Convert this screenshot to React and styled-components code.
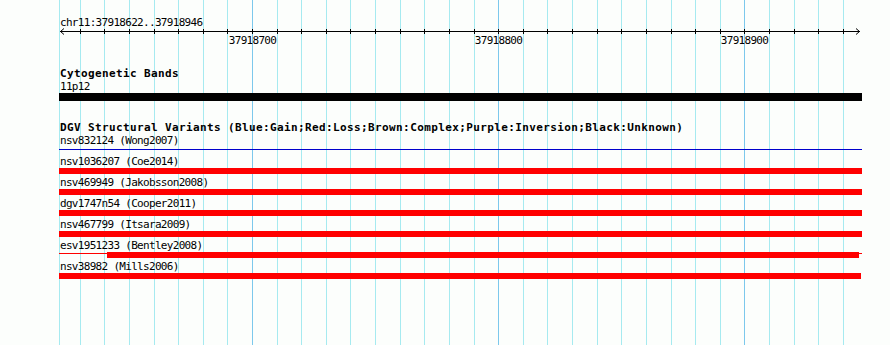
import React from "react";
import styled, { createGlobalStyle } from "styled-components";

const GlobalStyle = createGlobalStyle`
  html, body { margin: 0; padding: 0; background: #fcfefc; }
`;

const REF_BP = 37918700;
const REF_X = 252;
const PX_PER_BP = 2.462;
const LEFT = 59;
const TRACK_W = 803;
const bpToX = (bp) => Math.round(REF_X + (bp - REF_BP) * PX_PER_BP);

const gridKs = Array.from({ length: 32 }, (_, i) => i - 7);
const gridLines = gridKs.map((k) => ({ x: bpToX(REF_BP + k * 10), major: k % 10 === 0 }));
const tickLabels = [37918700, 37918800, 37918900];

const features = [
  { id: "nsv832124", study: "Wong2007", kind: "line", color: "#0000cc", lineOffset: 2 },
  { id: "nsv1036207", study: "Coe2014", kind: "bar", start: 0, width: 803 },
  { id: "nsv469949", study: "Jakobsson2008", kind: "bar", start: 0, width: 803 },
  { id: "dgv1747n54", study: "Cooper2011", kind: "bar", start: 0, width: 803 },
  { id: "nsv467799", study: "Itsara2009", kind: "bar", start: 0, width: 803 },
  { id: "esv1951233", study: "Bentley2008", kind: "split", start: 48, width: 752, lineOffset: 1 },
  { id: "nsv38982", study: "Mills2006", kind: "bar", start: 0, width: 802 },
];

const Page = styled.div`
  position: relative;
  width: 890px;
  height: 345px;
  overflow: hidden;
  background: #fcfefc;
`;

const GridLayer = styled.svg`
  position: absolute;
  left: 0;
  top: 0;
  z-index: 0;
`;

const Content = styled.div`
  position: relative;
  z-index: 1;
  padding: 17px 0 0 ${LEFT}px;
  width: ${TRACK_W}px;
  display: flex;
  flex-direction: column;
`;

const SmallText = styled.div`
  font-family: "DejaVu Sans Mono", "Liberation Mono", monospace;
  font-size: 11px;
  letter-spacing: -0.69px;
  line-height: ${(p) => p.$lh || 13}px;
  color: #000;
  padding-left: 1px;
  white-space: pre;
`;

const TrackTitle = styled.div`
  font-family: "DejaVu Sans Mono", "Liberation Mono", monospace;
  font-weight: bold;
  font-size: 11px;
  letter-spacing: 0.38px;
  line-height: 13px;
  color: #000;
  padding-left: 1px;
  margin-top: ${(p) => p.$gap}px;
  white-space: pre;
`;

const RulerSvg = styled.svg`
  display: block;
  overflow: visible;
`;

const Section = styled.section`
  display: flex;
  flex-direction: column;
`;

const BandBar = styled.div`
  height: 8px;
  width: ${TRACK_W}px;
  background: #000;
`;

const FeatureRow = styled.div`
  display: flex;
  flex-direction: column;
  margin-bottom: 2px;
`;

const BarSlot = styled.div`
  position: relative;
  height: 6px;
  width: ${TRACK_W}px;
`;

const ThinLine = styled.div`
  height: 1px;
  width: ${TRACK_W}px;
  margin-top: ${(p) => p.$offset}px;
  background: ${(p) => p.$color};
`;

const ThickBar = styled.div`
  height: 6px;
  background: #ff0000;
`;

const OverBar = styled(ThickBar)`
  position: absolute;
  top: 0;
`;

function Ruler() {
  const w = TRACK_W;
  const y = 3.5;
  return (
    <RulerSvg width={w} height={20} viewBox={`0 0 ${w} 20`}>
      <line x1={1} y1={y} x2={801} y2={y} stroke="#000" strokeWidth="1" />
      <polyline points={`5,0.5 1.5,${y} 5,6.5`} fill="none" stroke="#000" strokeWidth="1" />
      <polyline points={`797,0.5 800.5,${y} 797,6.5`} fill="none" stroke="#000" strokeWidth="1" />
      {gridLines.map((g) => (
        <line key={g.x} x1={g.x - LEFT + 0.5} y1={1} x2={g.x - LEFT + 0.5} y2={6} stroke="#000" strokeWidth="1" />
      ))}
      {tickLabels.map((bp) => (
        <text
          key={bp}
          x={bpToX(bp) - LEFT + 0.5}
          y={16}
          textAnchor="middle"
          fontFamily='"DejaVu Sans Mono", "Liberation Mono", monospace'
          fontSize="11"
          letterSpacing="-0.69"
          fill="#000"
        >
          {bp}
        </text>
      ))}
    </RulerSvg>
  );
}

function Feature({ f }) {
  return (
    <FeatureRow>
      <SmallText>{`${f.id} (${f.study})`}</SmallText>
      <BarSlot>
        {f.kind === "line" && <ThinLine $offset={f.lineOffset} $color={f.color} />}
        {f.kind === "bar" && <ThickBar style={{ marginLeft: f.start, width: f.width }} />}
        {f.kind === "split" && (
          <>
            <ThinLine $offset={f.lineOffset} $color="#ff0000" />
            <OverBar style={{ left: f.start, width: f.width }} />
          </>
        )}
      </BarSlot>
    </FeatureRow>
  );
}

export default function App() {
  return (
    <>
      <GlobalStyle />
      <Page>
        <GridLayer width={890} height={345} viewBox="0 0 890 345">
          <line x1={LEFT + 0.5} y1={0} x2={LEFT + 0.5} y2={345} stroke="#a6eaf0" strokeWidth="1" />
          {gridLines.map((g) => (
            <line
              key={g.x}
              x1={g.x + 0.5}
              y1={0}
              x2={g.x + 0.5}
              y2={345}
              stroke={g.major ? "#7cc8ec" : "#a6eaf0"}
              strokeWidth="1"
            />
          ))}
        </GridLayer>
        <Content>
          <SmallText $lh={11}>chr11:37918622..37918946</SmallText>
          <Ruler />
          <Section>
            <TrackTitle $gap={19}>Cytogenetic Bands</TrackTitle>
            <SmallText>11p12</SmallText>
            <BandBar />
          </Section>
          <Section>
            <TrackTitle $gap={20}>
              DGV Structural Variants (Blue:Gain;Red:Loss;Brown:Complex;Purple:Inversion;Black:Unknown)
            </TrackTitle>
            {features.map((f) => (
              <Feature key={f.id} f={f} />
            ))}
          </Section>
        </Content>
      </Page>
    </>
  );
}
